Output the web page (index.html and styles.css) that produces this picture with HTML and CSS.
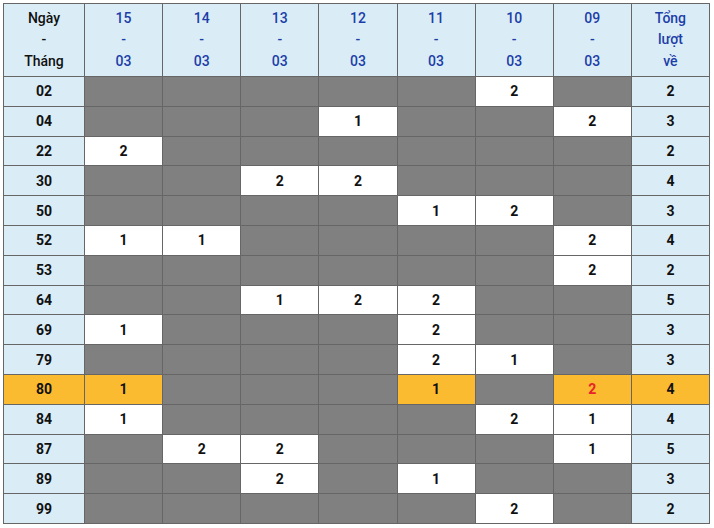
FILE: index.html
```html
<!DOCTYPE html>
<html lang="vi">
<head>
<meta charset="utf-8">
<link rel="stylesheet" href="styles.css">
</head>
<body>
<table class="grid">
<colgroup><col class="c-lead"><col><col><col><col><col><col><col><col></colgroup>
<thead>
<tr>
<th class="lead">Ngày<br>-<br>Tháng</th>
<th class="date">15<br>-<br>03</th>
<th class="date">14<br>-<br>03</th>
<th class="date">13<br>-<br>03</th>
<th class="date">12<br>-<br>03</th>
<th class="date">11<br>-<br>03</th>
<th class="date">10<br>-<br>03</th>
<th class="date">09<br>-<br>03</th>
<th class="date">Tổng<br>lượt<br>về</th>
</tr>
</thead>
<tbody>
<tr><td class="key">02</td><td class="off"></td><td class="off"></td><td class="off"></td><td class="off"></td><td class="off"></td><td class="on">2</td><td class="off"></td><td class="sum">2</td></tr>
<tr><td class="key">04</td><td class="off"></td><td class="off"></td><td class="off"></td><td class="on">1</td><td class="off"></td><td class="off"></td><td class="on">2</td><td class="sum">3</td></tr>
<tr><td class="key">22</td><td class="on">2</td><td class="off"></td><td class="off"></td><td class="off"></td><td class="off"></td><td class="off"></td><td class="off"></td><td class="sum">2</td></tr>
<tr><td class="key">30</td><td class="off"></td><td class="off"></td><td class="on">2</td><td class="on">2</td><td class="off"></td><td class="off"></td><td class="off"></td><td class="sum">4</td></tr>
<tr><td class="key">50</td><td class="off"></td><td class="off"></td><td class="off"></td><td class="off"></td><td class="on">1</td><td class="on">2</td><td class="off"></td><td class="sum">3</td></tr>
<tr><td class="key">52</td><td class="on">1</td><td class="on">1</td><td class="off"></td><td class="off"></td><td class="off"></td><td class="off"></td><td class="on">2</td><td class="sum">4</td></tr>
<tr><td class="key">53</td><td class="off"></td><td class="off"></td><td class="off"></td><td class="off"></td><td class="off"></td><td class="off"></td><td class="on">2</td><td class="sum">2</td></tr>
<tr><td class="key">64</td><td class="off"></td><td class="off"></td><td class="on">1</td><td class="on">2</td><td class="on">2</td><td class="off"></td><td class="off"></td><td class="sum">5</td></tr>
<tr><td class="key">69</td><td class="on">1</td><td class="off"></td><td class="off"></td><td class="off"></td><td class="on">2</td><td class="off"></td><td class="off"></td><td class="sum">3</td></tr>
<tr><td class="key">79</td><td class="off"></td><td class="off"></td><td class="off"></td><td class="off"></td><td class="on">2</td><td class="on">1</td><td class="off"></td><td class="sum">3</td></tr>
<tr class="hot"><td class="key">80</td><td class="on">1</td><td class="off"></td><td class="off"></td><td class="off"></td><td class="on">1</td><td class="off"></td><td class="on red">2</td><td class="sum">4</td></tr>
<tr><td class="key">84</td><td class="on">1</td><td class="off"></td><td class="off"></td><td class="off"></td><td class="off"></td><td class="on">2</td><td class="on">1</td><td class="sum">4</td></tr>
<tr><td class="key">87</td><td class="off"></td><td class="on">2</td><td class="on">2</td><td class="off"></td><td class="off"></td><td class="off"></td><td class="on">1</td><td class="sum">5</td></tr>
<tr><td class="key">89</td><td class="off"></td><td class="off"></td><td class="on">2</td><td class="off"></td><td class="on">1</td><td class="off"></td><td class="off"></td><td class="sum">3</td></tr>
<tr><td class="key">99</td><td class="off"></td><td class="off"></td><td class="off"></td><td class="off"></td><td class="off"></td><td class="on">2</td><td class="off"></td><td class="sum">2</td></tr>
</tbody>
</table>
</body>
</html>
```
FILE: styles.css
```css
html, body {
  margin: 0;
  padding: 0;
  background: #ffffff;
}
body {
  padding: 3px 0 0 3px;
  font-family: Roboto, "Liberation Sans", Arial, sans-serif;
}
.grid {
  width: 707px;
  border-collapse: collapse;
  table-layout: fixed;
}
.grid col.c-lead {
  width: 81px;
}
.grid th, .grid td {
  border: 1px solid #666666;
  text-align: center;
  vertical-align: middle;
  padding: 0;
}
.grid th {
  height: 72px;
  background: #daedf6;
  font-size: 14px;
  line-height: 21.5px;
  font-weight: 500;
}
.grid th.lead {
  color: #111111;
}
.grid th.date {
  color: #1d3ea8;
}
.grid td {
  height: 28.8px;
  font-size: 14px;
  font-weight: 700;
  color: #111111;
}
.grid td.key, .grid td.sum {
  background: #daedf6;
}
.grid td.off {
  background: #808080;
}
.grid td.on {
  background: #ffffff;
}
.grid tr.hot td.key, .grid tr.hot td.on, .grid tr.hot td.sum {
  background: #fbbb30;
}
.grid td.red {
  color: #e8232a;
}
```
